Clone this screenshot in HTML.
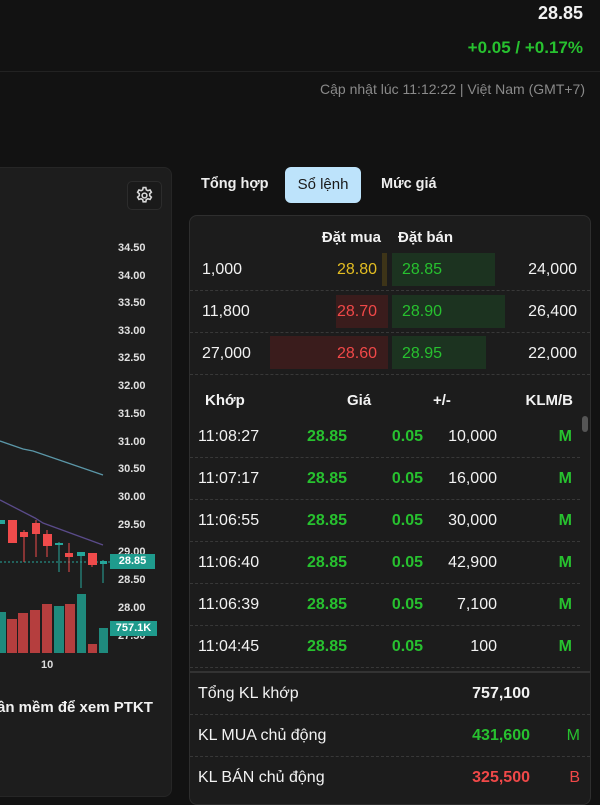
<!DOCTYPE html>
<html><head><meta charset="utf-8"><style>
*{margin:0;padding:0;box-sizing:border-box}
body{width:600px;height:800px;background:#121212;font-family:"Liberation Sans",sans-serif;color:#f2f2f2;position:relative;overflow:hidden}
.a{position:absolute;white-space:nowrap}
.g{color:#27c12f}.r{color:#f04848}.y{color:#e3bd22}
.ax{position:absolute;left:118px;font-size:11px;font-weight:bold;color:#e0e0e0;line-height:12px}
.dash{position:absolute;left:190px;width:400px;border-top:1px dashed #383838}
.b{font-weight:bold}
</style></head><body>
<div class="a b" style="right:17px;top:3px;font-size:18px">28.85</div>
<div class="a g" style="right:17px;top:38px;font-size:17px;font-weight:bold">+0.05 / +0.17%</div>
<div class="a" style="left:0;top:71px;width:600px;border-top:1px solid #222"></div>
<div class="a" style="right:15px;top:81px;font-size:14px;color:#8a8a8a">Cập nhật lúc 11:12:22 | Việt Nam (GMT+7)</div>

<!-- chart panel -->
<div class="a" style="left:-10px;top:167px;width:182px;height:630px;background:#1d1d1d;border-radius:8px;border:1px solid #262626"></div>
<div class="a" style="left:127px;top:181px;width:35px;height:29px;border:1px solid #2c2c2c;border-radius:5px;background:#1a1a1a"></div>
<svg class="a" style="left:135px;top:186px" width="19" height="19" viewBox="0 0 24 24" fill="none" stroke="#d8d8d8" stroke-width="2"><circle cx="12" cy="12" r="3"/><path d="M10.3 2h3.4l.6 2.8 2 1.1 2.7-.9 1.7 2.9-2.1 1.9v2.4l2.1 1.9-1.7 2.9-2.7-.9-2 1.1-.6 2.8h-3.4l-.6-2.8-2-1.1-2.7.9-1.7-2.9 2.1-1.9V9.8L3.3 7.9 5 5l2.7.9 2-1.1z"/></svg>
<div class="ax" style="top:242px">34.50</div><div class="ax" style="top:270px">34.00</div><div class="ax" style="top:297px">33.50</div><div class="ax" style="top:325px">33.00</div><div class="ax" style="top:352px">32.50</div><div class="ax" style="top:380px">32.00</div><div class="ax" style="top:408px">31.50</div><div class="ax" style="top:436px">31.00</div><div class="ax" style="top:463px">30.50</div><div class="ax" style="top:491px">30.00</div><div class="ax" style="top:519px">29.50</div><div class="ax" style="top:546px">29.00</div><div class="ax" style="top:574px">28.50</div><div class="ax" style="top:602px">28.00</div><div class="ax" style="top:630px">27.50</div>
<svg class="a" style="left:0;top:0" width="172" height="700">
<polyline points="0,441 23,449 33,451 103,475" fill="none" stroke="#5b97a8" stroke-width="1.3"/>
<polyline points="0,500 35,518 43,523 103,545" fill="none" stroke="#5a4b8a" stroke-width="1.3"/>
<line x1="0" y1="562" x2="110" y2="562" stroke="#26a69a" stroke-dasharray="2,2"/>
<g fill="#f04b4b" stroke="#f04b4b">
<rect x="8" y="520" width="9" height="23" stroke="none"/>
<line x1="24" y1="530" x2="24" y2="562"/><rect x="20" y="532" width="8" height="5" stroke="none"/>
<line x1="36" y1="520" x2="36" y2="557"/><rect x="32" y="523" width="8" height="11" stroke="none"/>
<line x1="47" y1="530" x2="47" y2="557"/><rect x="43" y="534" width="9" height="12" stroke="none"/>
<line x1="69" y1="543" x2="69" y2="572"/><rect x="65" y="553" width="8" height="4" stroke="none"/>
<line x1="92" y1="553" x2="92" y2="567"/><rect x="88" y="553" width="9" height="12" stroke="none"/>
</g>
<g fill="#26a69a" stroke="#26a69a">
<rect x="0" y="520" width="5" height="4" stroke="none"/>
<line x1="59" y1="542" x2="59" y2="572"/><rect x="55" y="543" width="8" height="2" stroke="none"/>
<line x1="81" y1="552" x2="81" y2="588"/><rect x="77" y="552" width="8" height="4" stroke="none"/>
<line x1="103" y1="560" x2="103" y2="583"/><rect x="100" y="561" width="7" height="3" stroke="none"/>
</g>
<g fill="#1f8a7d"><rect x="0" y="612" width="6" height="41"/><rect x="54" y="606" width="10" height="47"/><rect x="77" y="594" width="9" height="59"/><rect x="99" y="628" width="9" height="25"/></g>
<g fill="#b53e3e"><rect x="7" y="619" width="10" height="34"/><rect x="18" y="613" width="10" height="40"/><rect x="30" y="610" width="10" height="43"/><rect x="42" y="604" width="10" height="49"/><rect x="65" y="604" width="10" height="49"/><rect x="88" y="644" width="9" height="9"/></g>
</svg>
<div class="a" style="left:110px;top:554px;width:45px;height:15px;background:#1f9b8d;font-size:11px;font-weight:bold;color:#fff;text-align:center;line-height:15px">28.85</div>
<div class="a" style="left:110px;top:621px;width:47px;height:15px;background:#1f9b8d;font-size:11px;font-weight:bold;color:#fff;text-align:center;line-height:15px">757.1K</div>
<div class="a b" style="left:41px;top:659px;font-size:11px;color:#ddd">10</div>
<div class="a b" style="left:-3px;top:699px;font-size:15px">ần mềm để xem PTKT</div>

<!-- tabs -->
<div class="a" style="left:201px;top:176px;font-size:14.5px;font-weight:bold;color:#eee">Tổng hợp</div>
<div class="a" style="left:285px;top:167px;width:76px;height:36px;background:#bde3fb;border-radius:6px;color:#1a1a1a;font-size:15px;text-align:center;line-height:36px">Sổ lệnh</div>
<div class="a" style="left:381px;top:176px;font-size:14.5px;font-weight:bold;color:#eee">Mức giá</div>

<!-- panel -->
<div class="a" style="left:189px;top:215px;width:402px;height:590px;background:#1c1c1c;border:1px solid #2e2e2e;border-radius:8px"></div>
<div class="a b" style="right:219px;top:229px;font-size:15px">Đặt mua</div>
<div class="a b" style="left:398px;top:229px;font-size:15px">Đặt bán</div>
<div class="a" style="left:382px;top:253px;width:5px;height:33px;background:#3d3418"></div>
<div class="a" style="left:392px;top:253px;width:103px;height:33px;background:#1c3320"></div>
<div class="a" style="left:336px;top:295px;width:52px;height:33px;background:#3a1c1c"></div>
<div class="a" style="left:392px;top:295px;width:113px;height:33px;background:#1c3320"></div>
<div class="a" style="left:270px;top:336px;width:118px;height:33px;background:#3a1c1c"></div>
<div class="a" style="left:392px;top:336px;width:94px;height:33px;background:#1c3320"></div>
<div class="dash" style="top:290px"></div><div class="dash" style="top:332px"></div><div class="dash" style="top:374px"></div>
<div style="font-size:16px">
<div class="a" style="left:202px;top:261px">1,000</div><div class="a y" style="right:223px;top:261px">28.80</div><div class="a g" style="left:402px;top:261px">28.85</div><div class="a" style="right:23px;top:261px">24,000</div>
<div class="a" style="left:202px;top:303px">11,800</div><div class="a r" style="right:223px;top:303px">28.70</div><div class="a g" style="left:402px;top:303px">28.90</div><div class="a" style="right:23px;top:303px">26,400</div>
<div class="a" style="left:202px;top:345px">27,000</div><div class="a r" style="right:223px;top:345px">28.60</div><div class="a g" style="left:402px;top:345px">28.95</div><div class="a" style="right:23px;top:345px">22,000</div>
</div>
<div class="a b" style="left:205px;top:392px;font-size:15px">Khớp</div>
<div class="a b" style="left:347px;top:392px;font-size:15px">Giá</div>
<div class="a b" style="left:433px;top:392px;font-size:15px">+/-</div>
<div class="a b" style="right:27px;top:392px;font-size:15px">KLM/B</div>
<div class="a" style="left:582px;top:416px;width:6px;height:16px;background:#555;border-radius:3px"></div>
<div style="font-size:16px">
<div class="dash" style="top:457px;width:390px"></div><div class="dash" style="top:499px;width:390px"></div><div class="dash" style="top:541px;width:390px"></div><div class="dash" style="top:583px;width:390px"></div><div class="dash" style="top:625px;width:390px"></div><div class="dash" style="top:667px;width:390px"></div>
<div class="a" style="left:198px;top:428px">11:08:27</div><div class="a" style="left:198px;top:470px">11:07:17</div><div class="a" style="left:198px;top:512px">11:06:55</div><div class="a" style="left:198px;top:554px">11:06:40</div><div class="a" style="left:198px;top:596px">11:06:39</div><div class="a" style="left:198px;top:638px">11:04:45</div>
<div class="a g b" style="right:253px;top:428px">28.85</div><div class="a g b" style="right:253px;top:470px">28.85</div><div class="a g b" style="right:253px;top:512px">28.85</div><div class="a g b" style="right:253px;top:554px">28.85</div><div class="a g b" style="right:253px;top:596px">28.85</div><div class="a g b" style="right:253px;top:638px">28.85</div>
<div class="a g b" style="right:177px;top:428px">0.05</div><div class="a g b" style="right:177px;top:470px">0.05</div><div class="a g b" style="right:177px;top:512px">0.05</div><div class="a g b" style="right:177px;top:554px">0.05</div><div class="a g b" style="right:177px;top:596px">0.05</div><div class="a g b" style="right:177px;top:638px">0.05</div>
<div class="a" style="right:103px;top:428px">10,000</div><div class="a" style="right:103px;top:470px">16,000</div><div class="a" style="right:103px;top:512px">30,000</div><div class="a" style="right:103px;top:554px">42,900</div><div class="a" style="right:103px;top:596px">7,100</div><div class="a" style="right:103px;top:638px">100</div>
<div class="a g b" style="right:28px;top:428px">M</div><div class="a g b" style="right:28px;top:470px">M</div><div class="a g b" style="right:28px;top:512px">M</div><div class="a g b" style="right:28px;top:554px">M</div><div class="a g b" style="right:28px;top:596px">M</div><div class="a g b" style="right:28px;top:638px">M</div>
</div>
<div class="a" style="left:190px;top:671px;width:400px;border-top:2px solid #333"></div>
<div class="dash" style="top:714px"></div><div class="dash" style="top:756px"></div>
<div style="font-size:16px">
<div class="a" style="left:198px;top:685px">Tổng KL khớp</div><div class="a b" style="right:70px;top:685px">757,100</div>
<div class="a" style="left:198px;top:727px">KL MUA chủ động</div><div class="a g b" style="right:70px;top:727px">431,600</div><div class="a g" style="right:20px;top:727px">M</div>
<div class="a" style="left:198px;top:769px">KL BÁN chủ động</div><div class="a r b" style="right:70px;top:769px">325,500</div><div class="a r" style="right:20px;top:769px">B</div>
</div>
</body></html>
